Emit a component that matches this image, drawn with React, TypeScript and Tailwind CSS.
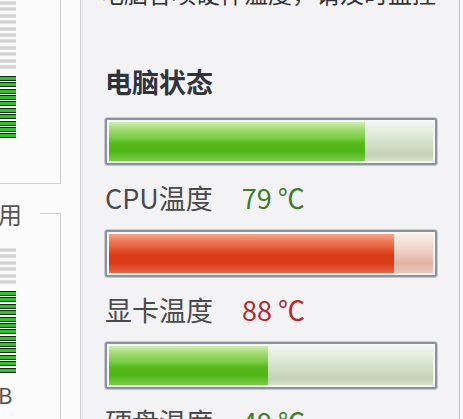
import React from 'react';

type BarTone = 'green' | 'red';

const fillClass: Record<BarTone, string> = {
  green:
    'bg-[image:linear-gradient(to_bottom,#cdeeb4_0%,#a3dd77_18%,#7ccd45_40%,#55b91c_55%,#4fb516_75%,#79cc48_100%)]',
  red:
    'bg-[image:linear-gradient(to_bottom,#f7a58c_0%,#f07a58_18%,#e7532f_40%,#dc3a16_55%,#d93a18_75%,#e8674a_100%)]',
};

const trackClass: Record<BarTone, string> = {
  green:
    'bg-[image:linear-gradient(to_bottom,#f3f6ef_0%,#e2eadb_30%,#cfdcc3_60%,#c3d3b5_85%,#d6e2cc_100%)]',
  red:
    'bg-[image:linear-gradient(to_bottom,#faeee9_0%,#f1d3ca_40%,#e3b2a4_75%,#ebc6bb_100%)]',
};

const valueClass: Record<BarTone, string> = {
  green: 'text-[#3c7d2a]',
  red: 'text-[#b3282d]',
};

const temps: { label: string; value: number; tone: BarTone }[] = [
  { label: 'CPU温度', value: 79, tone: 'green' },
  { label: '显卡温度', value: 88, tone: 'red' },
  { label: '硬盘温度', value: 49, tone: 'green' },
];

// striped level meter from the neighbouring panel
const Meter: React.FC<{ grey: number; green: number }> = ({ grey, green }) => (
  <div className="flex flex-col w-[16px]">
    <div className="flex flex-col gap-[2.4px]">
      {Array.from({ length: grey }).map((_, i) => (
        <div key={i} className="h-[4px] bg-[#d2d2d2] border-y border-[#e2e2e2]" />
      ))}
    </div>
    <div className="flex flex-col gap-[1.4px] mt-[7px]">
      {Array.from({ length: green }).map((_, i) => (
        <div key={i} className="h-[5px] bg-[#2fc22a] border-y-[1.5px] border-[#0f2a0f]" />
      ))}
    </div>
  </div>
);

const TempBar: React.FC<{ value: number; tone: BarTone }> = ({ value, tone }) => (
  <div className="h-[49px] rounded-[3px] border border-[#c5cad0]">
    <div className="h-full rounded-[2px] border-2 border-[#8d949b] bg-[#f6f7f5] p-[2px]">
      <div className={`h-full flex ${trackClass[tone]}`}>
        <div className={`h-full ${fillClass[tone]}`} style={{ width: `${value}%` }} />
      </div>
    </div>
  </div>
);

export default function App() {
  return (
    <div className="w-[463px] h-[419px] overflow-hidden flex bg-[#fbfbfb] font-['Noto_Sans_CJK_SC','Liberation_Sans',sans-serif]">
      {/* left: part of another window */}
      <div className="w-[80px] h-full flex flex-col bg-[#fbfbfb]">
        <div className="w-[61px] h-[184px] shrink-0 border-r border-b border-[#cfcfcf] pt-[1px]">
          <Meter grey={11} green={10} />
        </div>
        <div className="h-[26px] mt-[17px] flex shrink-0">
          <span className="text-[24px] leading-[26px] ml-[-2px] w-[24px] text-[#555]">用</span>
          <div className="ml-[18px] w-[21px] mt-[12px] border-t border-r border-[#cfcfcf]" />
        </div>
        <div className="w-[61px] flex-1 border-r border-[#cfcfcf] pt-[21px] flex flex-col">
          <Meter grey={6} green={13} />
          <span className="mt-[10px] ml-[-2px] text-[22px] leading-[22px] text-[#555]">B</span>
        </div>
      </div>

      {/* divider */}
      <div className="w-px bg-[#d3d3d3]" />
      <div className="w-[2px] bg-[#ebebee]" />

      {/* right panel */}
      <div className="flex-1 flex flex-col bg-[#f3f3f6] pl-[21px] pr-[21px]">
        <div className="mt-[-22px] ml-[-4px] text-[24px] leading-[30px] text-[#333] whitespace-nowrap">
          电脑各项硬件温度，请及时监控
        </div>
        <div className="mt-[57px] ml-[1px] text-[27px] leading-[34px] font-bold text-[#30333e]">
          电脑状态
        </div>
        <div className="mt-[18px] flex flex-col">
          {temps.map((t) => (
            <div key={t.label} className="flex flex-col">
              <TempBar value={t.value} tone={t.tone} />
              <div className="h-[63px] flex items-center gap-[29px] ml-[1px] text-[27px] leading-none whitespace-nowrap">
                <span className="text-[#4a4a4a]">{t.label}</span>
                <span className={valueClass[t.tone]}>{t.value} ℃</span>
              </div>
            </div>
          ))}
        </div>
      </div>

      {/* right window edge */}
      <div className="w-px bg-[#a9c6e6]" />
      <div className="w-[3px] bg-[#f7f9fd]" />
    </div>
  );
}
